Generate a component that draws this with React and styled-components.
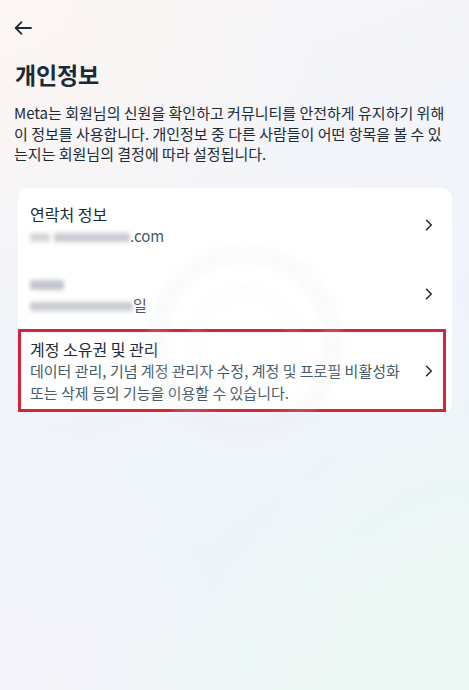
import React from "react";
import styled, { createGlobalStyle } from "styled-components";

const GlobalStyle = createGlobalStyle`
  html, body { margin: 0; padding: 0; }
  body {
    font-family: "Noto Sans CJK KR", "Noto Sans", sans-serif;
    color: #1c2b33;
  }
  * { box-sizing: border-box; }
`;

const Page = styled.div`
  position: relative;
  width: 469px;
  height: 690px;
  overflow: hidden;
  background:
    radial-gradient(ellipse 70% 45% at 0% 0%, #fcf6f3 0%, rgba(252,246,243,0) 100%),
    radial-gradient(ellipse 60% 50% at 100% 100%, #ecf8f3 0%, rgba(236,248,243,0) 100%),
    radial-gradient(ellipse 50% 40% at 0% 100%, #f6f3fa 0%, rgba(246,243,250,0) 100%),
    linear-gradient(160deg, #f8f6f8 0%, #f1f4fa 45%, #eef5fa 75%, #eef8f5 100%);
`;

const Header = styled.header`
  display: flex;
  flex-direction: column;
  padding: 18px 0 0 14px;
`;

const BackButton = styled.button`
  display: flex;
  align-items: center;
  justify-content: center;
  width: 20px;
  height: 20px;
  margin: 0 0 0 -1px;
  padding: 0;
  border: 0;
  background: none;
  color: #1c2b33;
`;

const Title = styled.h1`
  margin: 20px 0 0 1px;
  font-size: 23px;
  line-height: 32px;
  font-weight: 700;
  letter-spacing: -0.2px;
  color: #1c2b33;
`;

const Intro = styled.p`
  margin: 13px 0 0 0;
  font-size: 15px;
  line-height: 20.5px;
  font-weight: 400;
  color: #1c2b33;
  white-space: nowrap;
`;

const Card = styled.section`
  position: relative;
  margin: 23px 17px 0 18px;
  padding-top: 2px;
  background: #ffffff;
  border-radius: 10px;
  display: flex;
  flex-direction: column;
`;

const Row = styled.div`
  position: relative;
  display: flex;
  align-items: center;
  gap: 20px;
  padding: ${(p) => p.$pt}px 15px ${(p) => p.$pb}px 12px;
`;

const RowText = styled.div`
  flex: 1;
  min-width: 0;
`;

const RowTitle = styled.div`
  font-size: 16px;
  line-height: 22px;
  height: 22px;
  color: #1c2b33;
  white-space: nowrap;
`;

const RowSub = styled.div`
  font-size: 15px;
  line-height: 22px;
  color: #465a69;
  white-space: nowrap;
`;

const Chevron = styled.span`
  flex: none;
  width: 16px;
  height: 16px;
  display: flex;
  align-items: center;
  justify-content: center;
  color: #1c2b33;
`;

const Blur = styled.span`
  display: inline-block;
  vertical-align: middle;
  width: ${(p) => p.$w}px;
  height: ${(p) => p.$h || 9}px;
  background: ${(p) => p.$c || "#c4c8cc"};
  filter: blur(2px);
  border-radius: 2px;
  margin-right: ${(p) => p.$mr || 0}px;
`;

const Highlight = styled.div`
  position: absolute;
  left: 0;
  right: 6px;
  top: 0;
  bottom: 1px;
  border: 3px solid #d3243a;
  pointer-events: none;
`;

const Watermark = styled.svg`
  position: absolute;
  left: 135px;
  top: 232px;
  width: 220px;
  height: 220px;
  pointer-events: none;
  opacity: 0.3;
`;

const ArrowIcon = () => (
  <svg width="18" height="14" viewBox="0 0 18 14" fill="none">
    <path d="M17 7H2M7.5 1.2L1.7 7l5.8 5.8" stroke="#1c2b33" strokeWidth="1.8" strokeLinecap="round" strokeLinejoin="round" />
  </svg>
);

const ChevronIcon = () => (
  <svg width="8" height="12" viewBox="0 0 8 12" fill="none">
    <path d="M1.5 1.2L6.3 6l-4.8 4.8" stroke="#1c2b33" strokeWidth="1.5" strokeLinecap="round" strokeLinejoin="round" />
  </svg>
);

export default function App() {
  return (
    <>
      <GlobalStyle />
      <Page>
        <Header>
          <BackButton aria-label="뒤로">
            <ArrowIcon />
          </BackButton>
          <Title>개인정보</Title>
          <Intro>
            Meta는 회원님의 신원을 확인하고 커뮤니티를 안전하게 유지하기 위해
            <br />
            이 정보를 사용합니다. 개인정보 중 다른 사람들이 어떤 항목을 볼 수 있
            <br />
            는지는 회원님의 결정에 따라 설정됩니다.
          </Intro>
        </Header>

        <Card>
          <Row $pt={13} $pb={12}>
            <RowText>
              <RowTitle>연락처 정보</RowTitle>
              <RowSub>
                <Blur $w={20} $c="#d3d6d9" $mr={4} />
                <Blur $w={76} $c="#c8cbcf" />
                <span>.com</span>
              </RowSub>
            </RowText>
            <Chevron>
              <ChevronIcon />
            </Chevron>
          </Row>

          <Row $pt={13} $pb={13}>
            <RowText>
              <RowTitle>
                <Blur $w={34} $h={10} $c="#c2c6ca" />
              </RowTitle>
              <RowSub>
                <Blur $w={103} $c="#c8cbcf" />
                <span>일</span>
              </RowSub>
            </RowText>
            <Chevron>
              <ChevronIcon />
            </Chevron>
          </Row>

          <Row $pt={9} $pb={9}>
            <RowText>
              <RowTitle>계정 소유권 및 관리</RowTitle>
              <RowSub>
                데이터 관리, 기념 계정 관리자 수정, 계정 및 프로필 비활성화
                <br />
                또는 삭제 등의 기능을 이용할 수 있습니다.
              </RowSub>
            </RowText>
            <Chevron>
              <ChevronIcon />
            </Chevron>
            <Highlight />
          </Row>
        </Card>

        <Watermark viewBox="0 0 220 220">
          <defs>
            <filter id="wmblur" x="-20%" y="-20%" width="140%" height="140%">
              <feGaussianBlur stdDeviation="5" />
            </filter>
          </defs>
          <circle cx="110" cy="110" r="88" stroke="#dfe3e8" strokeWidth="20" fill="none" filter="url(#wmblur)" opacity="0.5" />
          <circle cx="110" cy="110" r="50" stroke="#e4e7eb" strokeWidth="14" fill="none" filter="url(#wmblur)" opacity="0.35" />
        </Watermark>
      </Page>
    </>
  );
}
